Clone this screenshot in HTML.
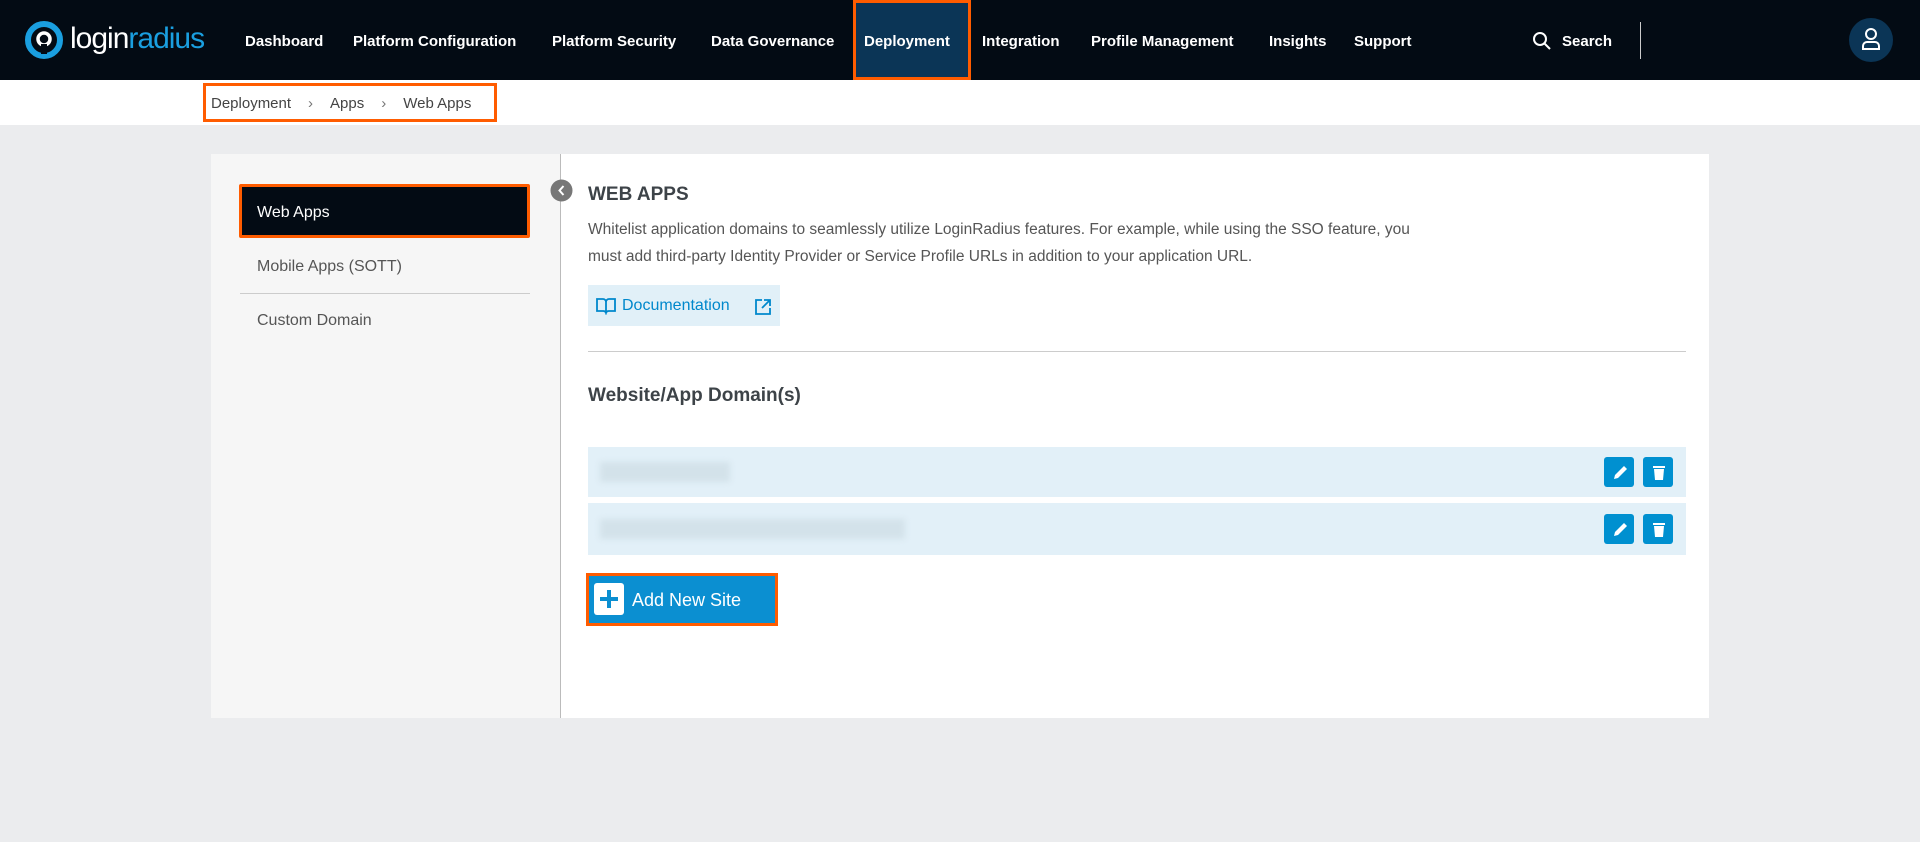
<!DOCTYPE html>
<html><head><meta charset="utf-8"><style>
*{box-sizing:border-box;margin:0;padding:0}
body{width:1920px;height:842px;background:#ebecee;font-family:"Liberation Sans",sans-serif;position:relative;overflow:hidden}
.nav{position:absolute;left:0;top:0;width:1920px;height:80px;background:#030b14}
.nav a{position:absolute;top:33px;color:#fff;font-size:15px;font-weight:bold;white-space:nowrap}
.abs{position:absolute}
.crumb{position:absolute;left:0;top:80px;width:1920px;height:45px;background:#fff}
.card{position:absolute;left:211px;top:154px;width:1498px;height:564px;background:#fff}
.side{position:absolute;left:211px;top:154px;width:350px;height:564px;background:#f6f6f6;border-right:1px solid #bbb}
.blur{position:absolute;background:#d3e2ea;filter:blur(3px);height:20px}
.btn{position:absolute;width:30px;height:30px;background:#0090d0;border-radius:3px}
</style></head><body>
<div class="nav">
 <svg class="abs" style="left:24px;top:20px" width="40" height="40" viewBox="0 0 40 40"><circle cx="20" cy="20" r="16" fill="none" stroke="#1a9fe0" stroke-width="6"/><circle cx="20" cy="19" r="6" fill="none" stroke="#fff" stroke-width="3.5"/><rect x="17" y="24" width="6" height="10" fill="#030b14"/></svg>
 <div class="abs" style="left:70px;top:22px;font-size:30px;color:#fff;letter-spacing:-1px">login<span style="color:#1a9fe0">radius</span></div>
 <div class="abs" style="left:853px;top:0;width:118px;height:80px;background:#0b3556;border:3px solid #ff5c00"></div>
 <a style="left:245px">Dashboard</a><a style="left:353px">Platform Configuration</a><a style="left:552px">Platform Security</a><a style="left:711px">Data Governance</a><a style="left:864px">Deployment</a><a style="left:982px">Integration</a><a style="left:1091px">Profile Management</a><a style="left:1269px">Insights</a><a style="left:1354px">Support</a>
 <svg class="abs" style="left:1532px;top:31px" width="20" height="20" viewBox="0 0 20 20"><circle cx="8" cy="8" r="6" fill="none" stroke="#fff" stroke-width="2"/><line x1="12.5" y1="12.5" x2="18" y2="18" stroke="#fff" stroke-width="2"/></svg>
 <a style="left:1562px">Search</a>
 <div class="abs" style="left:1640px;top:22px;width:1px;height:37px;background:#ccc"></div>
 <svg class="abs" style="left:1849px;top:18px" width="44" height="44" viewBox="0 0 44 44"><circle cx="22" cy="22" r="22" fill="#0b3556"/><circle cx="22" cy="16" r="5" fill="none" stroke="#fff" stroke-width="2"/><path d="M14 31 v-3 a4 4 0 0 1 4-4 h8 a4 4 0 0 1 4 4 v3 z" fill="none" stroke="#fff" stroke-width="2"/></svg>
</div>
<div class="crumb"></div>
<div class="abs" style="left:203px;top:83px;width:294px;height:39px;border:3px solid #ff5c00"></div>
<div class="abs" style="left:211px;top:95px;font-size:15px;color:#444">Deployment<span style="margin:0 17px 0 17px;color:#777">&#x203A;</span>Apps<span style="margin:0 17px;color:#777">&#x203A;</span>Web Apps</div>
<div class="card"></div>
<div class="side"></div>
<div class="abs" style="left:239px;top:184px;width:291px;height:54px;background:#030b14;border:3px solid #ff5c00;border-radius:2px"></div>
<div class="abs" style="left:257px;top:204px;font-size:16px;color:#fff">Web Apps</div>
<div class="abs" style="left:257px;top:258px;font-size:16px;color:#555">Mobile Apps (SOTT)</div>
<div class="abs" style="left:240px;top:293px;width:290px;height:1px;background:#ccc"></div>
<div class="abs" style="left:257px;top:312px;font-size:16px;color:#555">Custom Domain</div>
<svg class="abs" style="left:550px;top:179px" width="23" height="23" viewBox="0 0 23 23"><circle cx="11.5" cy="11.5" r="11" fill="#777"/><path d="M13.5 7 l-4 4.5 4 4.5" fill="none" stroke="#fff" stroke-width="2"/></svg>
<div class="abs" style="left:588px;top:184px;font-size:19px;font-weight:bold;color:#3d4348">WEB APPS</div>
<div class="abs" style="left:588px;top:216px;width:845px;font-size:15.5px;line-height:27px;color:#555">Whitelist application domains to seamlessly utilize LoginRadius features. For example, while using the SSO feature, you must add third-party Identity Provider or Service Profile URLs in addition to your application URL.</div>
<div class="abs" style="left:588px;top:285px;width:192px;height:41px;background:#e1f0f8"></div>
<svg class="abs" style="left:596px;top:297px" width="20" height="18" viewBox="0 0 20 18"><path d="M10 3 v13 M1 2 h6 a3 3 0 0 1 3 3 a3 3 0 0 1 3-3 h6 v12 h-6 a3 3 0 0 0-3 2 a3 3 0 0 0-3-2 h-6z" fill="none" stroke="#0088cc" stroke-width="1.8"/></svg>
<div class="abs" style="left:622px;top:297px;font-size:16px;color:#0088cc">Documentation</div>
<svg class="abs" style="left:755px;top:299px" width="16" height="16" viewBox="0 0 16 16"><path d="M7 1 h-6 v14 h14 v-6 M9 1 h6 v6 M15 1 l-8 8" fill="none" stroke="#0088cc" stroke-width="1.8"/></svg>
<div class="abs" style="left:588px;top:351px;width:1098px;height:1px;background:#ccc"></div>
<div class="abs" style="left:588px;top:385px;font-size:19px;font-weight:bold;color:#3d4348">Website/App Domain(s)</div>
<div class="abs" style="left:588px;top:447px;width:1098px;height:50px;background:#e2f0f8"></div>
<div class="abs" style="left:588px;top:503px;width:1098px;height:52px;background:#e2f0f8"></div>
<div class="blur" style="left:600px;top:462px;width:130px"></div>
<div class="blur" style="left:600px;top:519px;width:305px"></div>
<div class="btn" style="left:1604px;top:457px"></div><div class="btn" style="left:1643px;top:457px"></div>
<div class="btn" style="left:1604px;top:514px"></div><div class="btn" style="left:1643px;top:514px"></div>
<svg class="abs" style="left:1604px;top:457px" width="70" height="87" viewBox="0 0 70 87"><g fill="#fff"><path d="M10 22 l1-4 9-9 3 3-9 9z"/><path d="M49 9h12v2h-12z M50 12h10l-1 11h-8z"/><path d="M10 79 l1-4 9-9 3 3-9 9z"/><path d="M49 66h12v2h-12z M50 69h10l-1 11h-8z"/></g></svg>
<div class="abs" style="left:586px;top:573px;width:192px;height:53px;border:3px solid #ff5c00;background:#0b8fd1"></div>
<div class="abs" style="left:594px;top:583px;width:30px;height:32px;background:#fff;border-radius:3px"></div>
<div class="abs" style="left:600px;top:597px;width:18px;height:4px;background:#0b8fd1"></div>
<div class="abs" style="left:607px;top:590px;width:4px;height:18px;background:#0b8fd1"></div>
<div class="abs" style="left:632px;top:590px;font-size:18px;color:#fff">Add New Site</div>
</body></html>
